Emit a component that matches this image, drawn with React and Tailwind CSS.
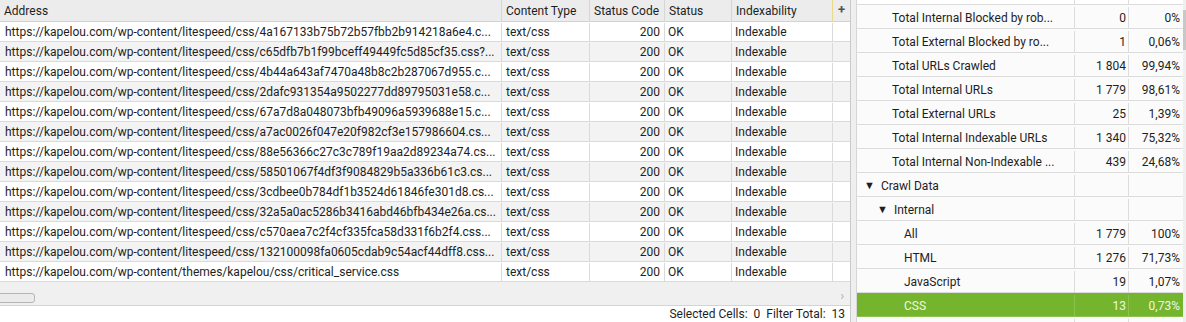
const rows = [
  'https://kapelou.com/wp-content/litespeed/css/4a167133b75b72b57fbb2b914218a6e4.c...',
  'https://kapelou.com/wp-content/litespeed/css/c65dfb7b1f99bceff49449fc5d85cf35.css?...',
  'https://kapelou.com/wp-content/litespeed/css/4b44a643af7470a48b8c2b287067d955.c...',
  'https://kapelou.com/wp-content/litespeed/css/2dafc931354a9502277dd89795031e58.c...',
  'https://kapelou.com/wp-content/litespeed/css/67a7d8a048073bfb49096a5939688e15.c...',
  'https://kapelou.com/wp-content/litespeed/css/a7ac0026f047e20f982cf3e157986604.cs...',
  'https://kapelou.com/wp-content/litespeed/css/88e56366c27c3c789f19aa2d89234a74.cs...',
  'https://kapelou.com/wp-content/litespeed/css/58501067f4df3f9084829b5a336b61c3.cs...',
  'https://kapelou.com/wp-content/litespeed/css/3cdbee0b784df1b3524d61846fe301d8.cs...',
  'https://kapelou.com/wp-content/litespeed/css/32a5a0ac5286b3416abd46bfb434e26a.cs...',
  'https://kapelou.com/wp-content/litespeed/css/c570aea7c2f4cf335fca58d331f6b2f4.css...',
  'https://kapelou.com/wp-content/litespeed/css/132100098fa0605cdab9c54acf44dff8.css...',
  'https://kapelou.com/wp-content/themes/kapelou/css/critical_service.css',
]

const overview = [
  { label: 'Total Internal Blocked by rob...', n: '0', p: '0%', indent: 'pl-[35px]' },
  { label: 'Total External Blocked by ro...', n: '1', p: '0,06%', indent: 'pl-[35px]' },
  { label: 'Total URLs Crawled', n: '1 804', p: '99,94%', indent: 'pl-[35px]' },
  { label: 'Total Internal URLs', n: '1 779', p: '98,61%', indent: 'pl-[35px]' },
  { label: 'Total External URLs', n: '25', p: '1,39%', indent: 'pl-[35px]' },
  { label: 'Total Internal Indexable URLs', n: '1 340', p: '75,32%', indent: 'pl-[35px]' },
  { label: 'Total Internal Non-Indexable ...', n: '439', p: '24,68%', indent: 'pl-[35px]' },
  { label: 'Crawl Data', n: '', p: '', indent: 'pl-[7px]', caret: true },
  { label: 'Internal', n: '', p: '', indent: 'pl-[20px]', caret: true },
  { label: 'All', n: '1 779', p: '100%', indent: 'pl-[47px]' },
  { label: 'HTML', n: '1 276', p: '71,73%', indent: 'pl-[47px]' },
  { label: 'JavaScript', n: '19', p: '1,07%', indent: 'pl-[47px]' },
  { label: 'CSS', n: '13', p: '0,73%', indent: 'pl-[47px]', active: true },
  { label: '', n: '', p: '', indent: 'pl-[47px]' },
]

function HeadCell({ w, children, extra = '' }) {
  return (
    <div className={`${w} shrink-0 h-full flex items-center px-[4px] border-r border-[#d6d6d6] ${extra}`}>
      {children}
    </div>
  )
}

export default function App() {
  return (
    <div
      className="w-[1186px] h-[322px] overflow-hidden flex bg-[#efefef] text-[12px] text-[#1e1e1e]"
      style={{ fontFamily: 'Roboto, "Liberation Sans", sans-serif' }}
    >
      {/* results table */}
      <div className="w-[851px] shrink-0 flex flex-col bg-white border-r border-[#c9c9c9]">
        <div className="h-[22px] flex bg-[#ececec] border-b border-[#d2d2d2]">
          <HeadCell w="w-[502px]">Address</HeadCell>
          <HeadCell w="w-[88px]">Content Type</HeadCell>
          <HeadCell w="w-[75px]">Status Code</HeadCell>
          <HeadCell w="w-[67px]">Status</HeadCell>
          <HeadCell w="w-[101px]" extra="border-r-[#e9d98a]">Indexability</HeadCell>
          <div className="w-[17px] h-full flex items-start justify-center pt-[3px] text-[#555] font-bold text-[13px] leading-none">+</div>
        </div>
        {rows.map((url, i) => (
          <div key={i} className={`h-[20px] pt-[1px] flex border-b border-[#dadada] ${i % 2 ? 'bg-[#f3f3f3]' : 'bg-white'}`}>
            <div className="w-[502px] shrink-0 px-[5px] flex items-center whitespace-nowrap overflow-hidden border-r border-[#dadada]">{url}</div>
            <div className="w-[88px] shrink-0 px-[4px] flex items-center border-r border-[#dadada]">text/css</div>
            <div className="w-[75px] shrink-0 px-[4px] flex items-center justify-end border-r border-[#dadada]">200</div>
            <div className="w-[67px] shrink-0 px-[3px] flex items-center border-r border-[#dadada]">OK</div>
            <div className="w-[101px] shrink-0 px-[3px] flex items-center border-r border-[#dadada]">Indexable</div>
            <div className="w-[17px] shrink-0" />
          </div>
        ))}
        <div className="flex-1 flex flex-col bg-[#f0f0f0] border-b border-[#d4d4d4]">
          <div className="flex-1" />
          <div className="h-[12px] flex items-start justify-between pr-[6px]">
            <div className="w-[37px] h-[10px] -ml-[2px] rounded-r-[3px] border border-[#b5b5b5] bg-[#ebebeb]" />
            <span className="text-[#aaa] text-[12px] leading-none -mt-[3px]">›</span>
          </div>
        </div>
        <div className="h-[16px] flex items-center justify-end pr-[5px] gap-[6px] bg-white">
          <span>Selected Cells:&nbsp; 0</span>
          <span>Filter Total:&nbsp; 13</span>
        </div>
      </div>

      {/* splitter */}
      <div className="w-[5px] shrink-0 bg-[#efefef]" />

      {/* overview tree */}
      <div className="flex-1 flex bg-white border-l border-[#d6d6d6]">
        <div className="flex-1 flex flex-col">
          <div className="h-[5px] flex shrink-0 border-b border-[#dcdcdc]">
            <div className="w-[218px] border-r border-[#dcdcdc]" />
            <div className="w-[54px] border-r border-[#dcdcdc]" />
            <div className="flex-1" />
          </div>
          {overview.map((r, i) => (
            <div
              key={i}
              className={`h-[24px] pt-[2px] shrink-0 flex border-b ${r.active ? 'bg-[#74b52d] text-[#eef7e4] border-[#8cc34f]' : 'bg-[#fbfbfb] border-[#dcdcdc]'}`}
            >
              <div className={`w-[218px] shrink-0 flex items-center whitespace-nowrap overflow-hidden border-r ${r.active ? 'border-[#8cc34f]' : 'border-[#dcdcdc]'} ${r.indent}`}>
                {r.caret && <span className="text-[11px] mr-[6px] leading-none">▼</span>}
                {r.label}
              </div>
              <div className={`w-[54px] shrink-0 flex items-center justify-end pr-[2px] border-r ${r.active ? 'border-[#8cc34f]' : 'border-[#dcdcdc]'}`}>{r.n}</div>
              <div className="flex-1 flex items-center justify-end pr-[3px]">{r.p}</div>
            </div>
          ))}
        </div>
        <div className="w-[3px] shrink-0 bg-[#efefef] flex flex-col">
          <div className="h-[40px] mt-[10px] bg-[#c8c8c8]" />
        </div>
      </div>
    </div>
  )
}
